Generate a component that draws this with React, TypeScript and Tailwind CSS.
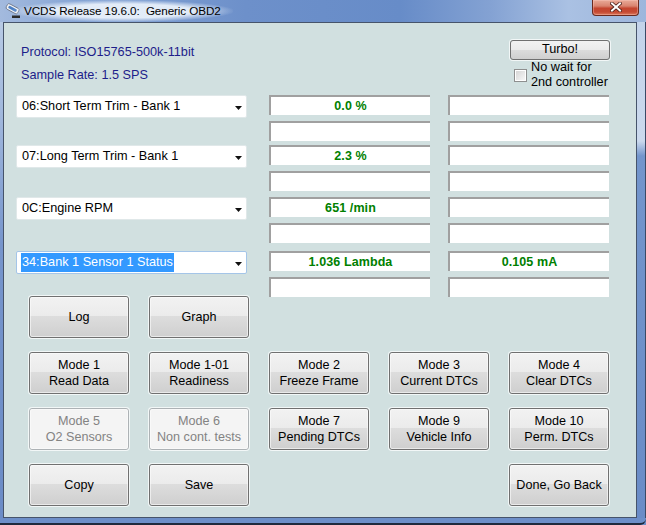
import React from "react";

function WinButton({
  children,
  disabled,
  className = "",
}: {
  children: React.ReactNode;
  disabled?: boolean;
  className?: string;
}) {
  return (
    <div
      className={`h-[42px] w-[100px] rounded-[3px] border shadow-[0_0_0_1px_#f2f7f7] ${
        disabled
          ? "border-[#adb2b5] bg-[#f4f4f4] text-[#838383]"
          : "border-[#707070] bg-[linear-gradient(180deg,#f2f2f2_0%,#ebebeb_48%,#dddddd_48%,#cfcfcf_100%)] text-black"
      } ${className}`}
    >
      <div className="flex h-full w-full flex-col items-center justify-center rounded-[2px] border border-[#fbfbfb]/60 text-center text-[12.6px] leading-[16px]">
        {children}
      </div>
    </div>
  );
}

function VBox({ children }: { children?: React.ReactNode }) {
  return (
    <div className="flex h-[20px] w-[161px] items-center justify-center border-l-2 border-t-2 border-[#a0a0a0] bg-white text-[12.5px] font-bold tracking-[0.1px] text-[#008000]">
      {children}
    </div>
  );
}

function Combo({ label, selected }: { label: string; selected?: boolean }) {
  return (
    <div
      className={`flex h-[23px] w-[231px] items-center rounded-[2px] border bg-white ${
        selected ? "border-[#a4c5e8]" : "border-[#e0e8e9]"
      }`}
    >
      <span
        className={`ml-[4px] h-[19px] whitespace-nowrap px-[1px] text-[12.7px] leading-[19px] ${
          selected ? "bg-[#3399ff] text-white" : "text-black"
        }`}
      >
        {label}
      </span>
      <svg className="ml-auto mr-[4px] mt-[2px]" width="7" height="4" viewBox="0 0 7 4">
        <path d="M0 0H7L3.5 4Z" fill="#111" />
      </svg>
    </div>
  );
}

const groups = [
  { label: "06:Short Term Trim - Bank 1", v1: "0.0 %", v2: "", mt: "mt-0", selected: false },
  { label: "07:Long Term Trim - Bank 1", v1: "2.3 %", v2: "", mt: "mt-[4px]", selected: false },
  { label: "0C:Engine RPM", v1: "651 /min", v2: "", mt: "mt-[6px]", selected: false },
  { label: "34:Bank 1 Sensor 1 Status", v1: "1.036 Lambda", v2: "0.105 mA", mt: "mt-[8px]", selected: true },
];

export default function App() {
  return (
    <div className="flex h-[525px] w-[646px] flex-col overflow-hidden bg-[#6b8dc8] font-['Liberation_Sans',Arial,sans-serif]">
      {/* Title bar */}
      <div className="flex h-[22px] items-start bg-[linear-gradient(90deg,#a3bade_0%,#86a5d5_12%,#6d90ca_38%,#678cc8_62%,#84a2d3_76%,#aac1e3_88%,#9db6dc_100%)]">
        <div className="ml-[5px] mt-[3px] h-[16px] w-[16px]">
          <svg width="16" height="16" viewBox="0 0 16 16">
            <g transform="rotate(28 8 6)">
              <rect x="1" y="3" width="13" height="6" rx="2" fill="#eef1f5" stroke="#687285" strokeWidth="0.8" />
              <rect x="3" y="4.6" width="9" height="2.8" rx="1" fill="#4b7fc4" />
            </g>
            <rect x="7" y="12.5" width="8" height="2.5" fill="#2b2b2b" />
          </svg>
        </div>
        <span className="-ml-[9px] flex h-[22px] items-center whitespace-pre bg-[radial-gradient(ellipse_at_center,rgba(232,240,250,0.95)_45%,rgba(232,240,250,0)_72%)] px-[12px] text-[11.7px] tracking-[-0.1px] text-black">
          VCDS Release 19.6.0:  Generic OBD2
        </span>
        <div className="ml-auto mr-[7px] flex h-[16px] w-[47px] items-center justify-center rounded-b-[4px] border border-t-0 border-[#6a2a1f] bg-[linear-gradient(180deg,#e9aa98_0%,#d98470_40%,#c4452f_55%,#c54a33_80%,#dc7a5e_100%)] shadow-[inset_0_0_0_1px_rgba(255,210,200,0.35)]">
          <svg width="12" height="10" viewBox="0 0 12 10" className="mb-[1px]">
            <path d="M2 1.5L10 8.5M10 1.5L2 8.5" stroke="#4a1e18" strokeWidth="3.6" strokeLinecap="square" />
            <path d="M2 1.5L10 8.5M10 1.5L2 8.5" stroke="#ffffff" strokeWidth="2" strokeLinecap="square" />
          </svg>
        </div>
      </div>

      {/* Body row */}
      <div className="flex h-[496px]">
        <div className="w-[3px] bg-[linear-gradient(180deg,#b7cae5_0%,#9fb6dc_20%,#7695cc_45%,#6b8cc7_100%)]" />
        <div className="w-[634px] border border-[#46546b] bg-[#d1e0e0]">
          {/* Top section */}
          <div className="flex h-[72px] justify-between">
            <div className="pl-[17px] pt-[21px] text-[12.7px] leading-[16px] text-[#1d1d8a]">
              <div>Protocol: ISO15765-500k-11bit</div>
              <div className="mt-[7px]">Sample Rate: 1.5 SPS</div>
            </div>
            <div className="pr-[26px] pt-[17px]">
              <div className="flex h-[20px] w-[100px] items-center justify-center rounded-[3px] border border-[#707070] bg-[linear-gradient(180deg,#f2f2f2_0%,#ebebeb_48%,#dddddd_48%,#cfcfcf_100%)] text-[12.7px] text-black shadow-[0_0_0_1px_#f2f7f7]">
                Turbo!
              </div>
              <div className="flex items-center">
                <div className="ml-[4px] h-[13px] w-[13px] border border-[#8e8f8f] bg-white p-[1px]">
                  <div className="h-full w-full bg-[linear-gradient(135deg,#d6d6d6,#f6f6f6)]" />
                </div>
                <div className="ml-[4px] text-[12.7px] leading-[15px] text-black">
                  <div>No wait for</div>
                  <div>2nd controller</div>
                </div>
              </div>
            </div>
          </div>

          {/* Data groups */}
          <div className="flex flex-col">
            {groups.map((g) => (
              <div key={g.label} className={`flex pl-[12px] ${g.mt}`}>
                <Combo label={g.label} selected={g.selected} />
                <div className="ml-[22px] flex flex-col gap-[6px]">
                  <VBox>{g.v1}</VBox>
                  <VBox />
                </div>
                <div className="ml-[18px] flex flex-col gap-[6px]">
                  <VBox>{g.v2}</VBox>
                  <VBox />
                </div>
              </div>
            ))}
          </div>

          {/* Buttons */}
          <div className="-mt-[1px] grid grid-cols-[repeat(5,100px)] gap-x-[20px] gap-y-[14px] pl-[25px]">
            <WinButton>Log</WinButton>
            <WinButton>Graph</WinButton>

            <WinButton className="col-start-1">
              <div>Mode 1</div>
              <div>Read Data</div>
            </WinButton>
            <WinButton>
              <div>Mode 1-01</div>
              <div>Readiness</div>
            </WinButton>
            <WinButton>
              <div>Mode 2</div>
              <div>Freeze Frame</div>
            </WinButton>
            <WinButton>
              <div>Mode 3</div>
              <div>Current DTCs</div>
            </WinButton>
            <WinButton>
              <div>Mode 4</div>
              <div>Clear DTCs</div>
            </WinButton>

            <WinButton disabled>
              <div>Mode 5</div>
              <div>O2 Sensors</div>
            </WinButton>
            <WinButton disabled>
              <div>Mode 6</div>
              <div className="whitespace-nowrap">Non cont. tests</div>
            </WinButton>
            <WinButton>
              <div>Mode 7</div>
              <div>Pending DTCs</div>
            </WinButton>
            <WinButton>
              <div>Mode 9</div>
              <div>Vehicle Info</div>
            </WinButton>
            <WinButton>
              <div>Mode 10</div>
              <div>Perm. DTCs</div>
            </WinButton>

            <WinButton>Copy</WinButton>
            <WinButton>Save</WinButton>
            <WinButton className="col-start-5">Done, Go Back</WinButton>
          </div>
        </div>
        <div className="w-[9px] border-r border-[#3a4a66] bg-[linear-gradient(180deg,#c3d3ea_0%,#cbd9ed_24%,#7395cc_27%,#6a8cc7_100%)]" />
      </div>

      {/* Bottom frame */}
      <div className="h-[7px] rounded-br-[6px] border-b-2 border-[#1f2a3d] bg-[#6d8fc9]" />
    </div>
  );
}
